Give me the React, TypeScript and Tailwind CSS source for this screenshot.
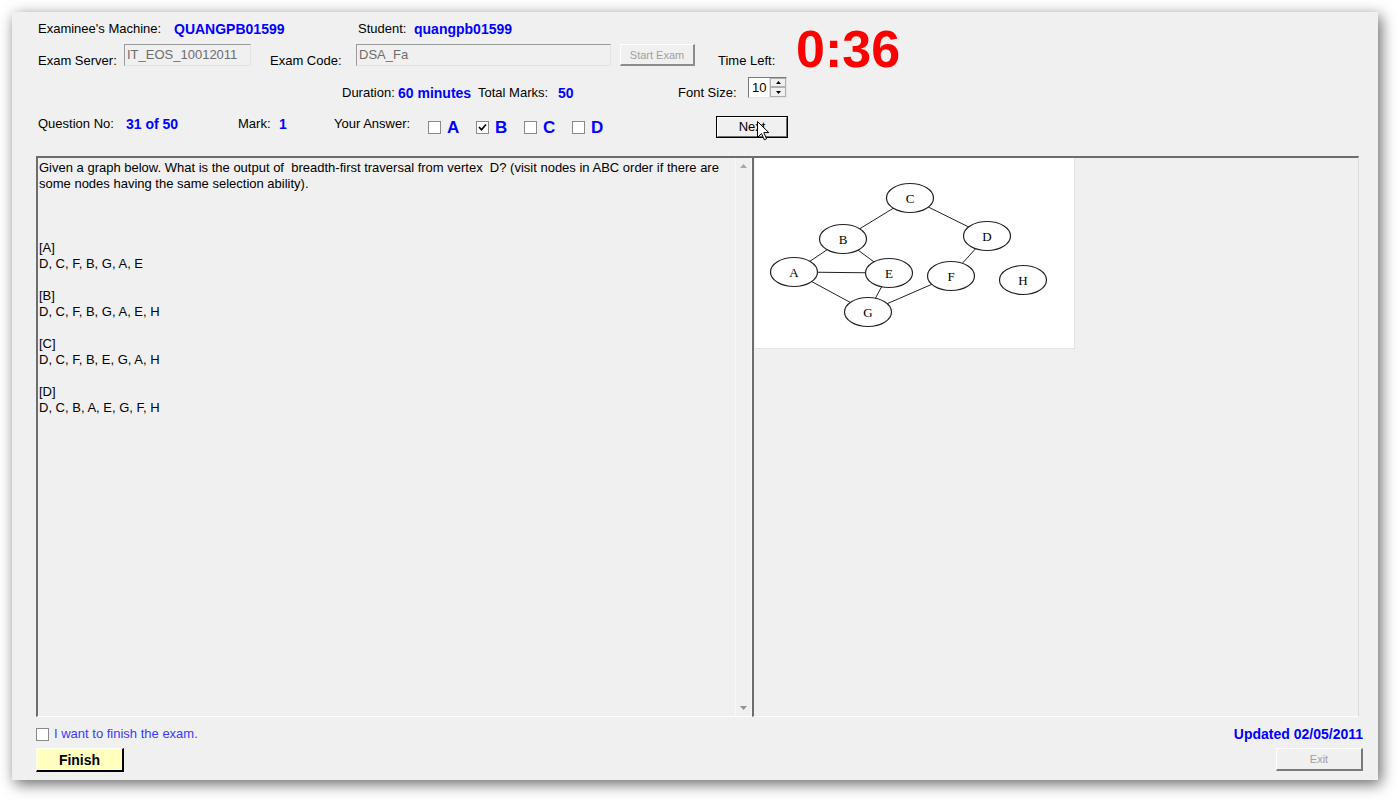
import React from "react";

const BLUE = "text-[#0000ff] font-bold text-[14px]";

function Check({ checked }: { checked?: boolean }) {
  return (
    <div className="w-[13px] h-[13px] border border-[#8a8a8a] bg-white shrink-0 flex items-center justify-center">
      {checked && (
        <svg width="9" height="9" viewBox="0 0 9 9">
          <path d="M1 4 L3.5 6.8 L8 1.5" stroke="#000" strokeWidth="1.7" fill="none" />
        </svg>
      )}
    </div>
  );
}

function TextBox({ w, value }: { w: string; value: string }) {
  return (
    <div
      className={`${w} h-[22px] shrink-0 border border-t-[#9a9a9a] border-l-[#9a9a9a] border-r-[#e3e3e3] border-b-[#e3e3e3] bg-[#f0f0f0] text-[13px] leading-[16px] text-[#6d6d6d] pl-[2px] pt-[2px]`}
    >
      {value}
    </div>
  );
}

function Answer({ letter, checked }: { letter: string; checked?: boolean }) {
  return (
    <div className="w-[48px] shrink-0 flex items-start">
      <div className="mt-[5px]">
        <Check checked={checked} />
      </div>
      <span className="ml-[6px] text-[17px] leading-[20px] mt-[2px] text-[#0000ff] font-bold">{letter}</span>
    </div>
  );
}

const nodes: [string, number, number][] = [
  ["C", 155, 40],
  ["B", 88, 81],
  ["D", 232, 78],
  ["A", 39, 114],
  ["E", 134, 115],
  ["F", 196, 118],
  ["H", 268, 122],
  ["G", 113, 154],
];
const edges: [string, string][] = [
  ["C", "B"],
  ["C", "D"],
  ["B", "A"],
  ["B", "E"],
  ["A", "E"],
  ["A", "G"],
  ["E", "G"],
  ["D", "F"],
  ["F", "G"],
];

function Graph() {
  const pos = (n: string) => {
    const f = nodes.find((x) => x[0] === n)!;
    return [f[1], f[2]];
  };
  return (
    <svg width="319" height="190" viewBox="0 0 319 190">
      {edges.map(([a, b], i) => {
        const [x1, y1] = pos(a);
        const [x2, y2] = pos(b);
        return <line key={i} x1={x1} y1={y1} x2={x2} y2={y2} stroke="#222" strokeWidth="1" />;
      })}
      {nodes.map(([n, x, y]) => (
        <g key={n}>
          <ellipse cx={x} cy={y} rx="23.5" ry="14.5" fill="#fff" stroke="#222" strokeWidth="1.2" />
          <text
            x={x}
            y={y + 4.5}
            textAnchor="middle"
            fontFamily="'Liberation Serif', 'Times New Roman', serif"
            fontSize="13"
            fill="#000"
          >
            {n}
          </text>
        </g>
      ))}
    </svg>
  );
}

export default function App() {
  return (
    <div className="w-[1398px] h-[800px] bg-white overflow-hidden font-['Liberation_Sans',Arial,sans-serif] text-[13px] leading-[16px] text-black">
      <div className="ml-[12px] mt-[12px] w-[1366px] h-[768px] bg-[#f0f0f0] shadow-[3px_4px_14px_rgba(0,0,0,0.6)] pl-[24px] pt-[9px]">
        {/* top area */}
        <div className="flex pl-[2px]">
          <div className="w-[758px] shrink-0">
            {/* row 1 */}
            <div className="flex items-center h-[16px]">
              <span className="w-[136px] shrink-0">Examinee's Machine:</span>
              <span className={`w-[184px] shrink-0 ${BLUE}`}>QUANGPB01599</span>
              <span className="w-[56px] shrink-0">Student:</span>
              <span className={BLUE}>quangpb01599</span>
            </div>
            {/* row 2 */}
            <div className="flex h-[22px] mt-[7px]">
              <span className="w-[86px] shrink-0 self-end mb-[-3px]">Exam Server:</span>
              <TextBox w="w-[127px]" value="IT_EOS_10012011" />
              <div className="w-[19px] shrink-0" />
              <span className="w-[86px] shrink-0 self-end mb-[-3px]">Exam Code:</span>
              <TextBox w="w-[255px]" value="DSA_Fa" />
              <div className="w-[9px] shrink-0" />
              <div className="w-[75px] h-[22px] shrink-0 border-t border-l border-white border-r-2 border-b-2 border-r-[#8c8c8c] border-b-[#8c8c8c] flex items-center justify-center text-[11px] text-[#a0a0a0]">
                Start Exam
              </div>
              <div className="w-[23px] shrink-0" />
              <span className="self-end mb-[-3px]">Time Left:</span>
            </div>
            {/* row 3 */}
            <div className="flex h-[22px] mt-[11px] pl-[304px]">
              <span className="w-[56px] shrink-0 self-end mb-[-2px]">Duration:</span>
              <span className={`w-[80px] shrink-0 self-end mb-[-2px] ${BLUE}`}>60 minutes</span>
              <span className="w-[80px] shrink-0 self-end mb-[-2px]">Total Marks:</span>
              <span className={`w-[120px] shrink-0 self-end mb-[-2px] ${BLUE}`}>50</span>
              <span className="w-[70px] shrink-0 self-end mb-[-2px]">Font Size:</span>
              <div className="w-[39px] h-[21px] shrink-0 border border-t-[#7a7a7a] border-l-[#7a7a7a] border-r-[#e3e3e3] border-b-[#e3e3e3] bg-white flex">
                <span className="flex-1 pl-[3px] pt-[2px] text-[13px] leading-[16px]">10</span>
                <div className="w-[17px] flex flex-col border-l border-[#e0e0e0]">
                  <div className="h-[9px] bg-[#f0f0f0] border border-[#b0b0b0] flex items-center justify-center">
                    <svg width="5" height="3" viewBox="0 0 5 3"><path d="M0 3 L2.5 0 L5 3 Z" fill="#000" /></svg>
                  </div>
                  <div className="h-[10px] bg-[#f0f0f0] border border-[#b0b0b0] flex items-center justify-center">
                    <svg width="5" height="3" viewBox="0 0 5 3"><path d="M0 0 L2.5 3 L5 0 Z" fill="#000" /></svg>
                  </div>
                </div>
              </div>
            </div>
            {/* row 4 */}
            <div className="flex items-start h-[22px] mt-[17px]">
              <span className="w-[88px] shrink-0">Question No:</span>
              <span className={`w-[112px] shrink-0 ${BLUE}`}>31 of 50</span>
              <span className="w-[41px] shrink-0">Mark:</span>
              <span className={`w-[55px] shrink-0 ${BLUE}`}>1</span>
              <span className="w-[94px] shrink-0">Your Answer:</span>
              <div className="flex">
                <Answer letter="A" />
                <Answer letter="B" checked />
                <Answer letter="C" />
                <Answer letter="D" />
                <div className="w-[96px] shrink-0" />
                <div className="relative w-[72px] h-[22px] shrink-0 border border-black">
                  <div className="w-full h-full border-t border-l border-white border-r border-b border-r-[#6d6d6d] border-b-[#6d6d6d] flex items-center justify-center">
                    Next
                  </div>
                  <svg className="absolute left-[40px] top-[4px]" width="13" height="20" viewBox="0 0 13 20">
                    <path d="M0.5 0.5 L0.5 16.5 L4.5 12.5 L7.3 18.8 L9.6 17.8 L6.8 11.6 L11.8 11.6 Z" fill="#fff" stroke="#000" strokeWidth="1" />
                  </svg>
                </div>
              </div>
            </div>
          </div>
          <div className="mt-[2px] text-[52px] leading-[52px] font-bold text-[#ff0000]">0:36</div>
        </div>

        {/* panels */}
        <div className="flex w-[1323px] h-[561px] mt-[18px]">
          <div className="w-[716px] h-full shrink-0 flex border-t-2 border-l-2 border-t-[#6d6d6d] border-l-[#6d6d6d] border-b border-b-white">
            <div className="flex-1 pl-[1px] pt-[2px] whitespace-pre-wrap leading-[16px] text-[13px]">
              {"Given a graph below. What is the output of  breadth-first traversal from vertex  D? (visit nodes in ABC order if there are some nodes having the same selection ability).\n\n\n\n[A]\nD, C, F, B, G, A, E\n\n[B]\nD, C, F, B, G, A, E, H\n\n[C]\nD, C, F, B, E, G, A, H\n\n[D]\nD, C, B, A, E, G, F, H"}
            </div>
            <div className="w-[17px] h-full shrink-0 flex flex-col justify-between items-center border-l border-r border-[#f8f8f8] bg-[#f0f0f0] py-[6px]">
              <svg width="7" height="4" viewBox="0 0 7 4"><path d="M0 4 L3.5 0 L7 4 Z" fill="#a8a8a8" /></svg>
              <svg width="7" height="4" viewBox="0 0 7 4"><path d="M0 0 L3.5 4 L7 0 Z" fill="#909090" /></svg>
            </div>
          </div>
          <div className="w-[607px] h-full shrink-0 border-t-2 border-l-2 border-t-[#6d6d6d] border-l-[#6d6d6d] border-r border-b border-r-[#dcdcdc] border-b-white pl-[1px]">
            <div className="w-[320px] h-[191px] bg-white border-r border-b border-[#e3e3e3]">
              <Graph />
            </div>
          </div>
        </div>

        {/* bottom row 1 */}
        <div className="flex items-center justify-between w-[1327px] h-[16px] mt-[9px]">
          <div className="flex items-center">
            <Check />
            <span className="ml-[5px] text-[#3a3aff]">I want to finish the exam.</span>
          </div>
          <span className={BLUE}>Updated 02/05/2011</span>
        </div>
        {/* bottom row 2 */}
        <div className="flex justify-between w-[1327px] mt-[6px]">
          <div className="w-[88px] h-[24px] bg-[#ffffc0] border-t border-l border-[#fffff0] border-r-2 border-b-2 border-r-black border-b-black flex items-center justify-center font-bold text-[14px]">
            Finish
          </div>
          <div className="w-[87px] h-[23px] border-t border-l border-white border-r-2 border-b-2 border-r-[#7a7a7a] border-b-[#7a7a7a] flex items-center justify-center text-[11px] text-[#a0a0a0]">
            Exit
          </div>
        </div>
      </div>
    </div>
  );
}
